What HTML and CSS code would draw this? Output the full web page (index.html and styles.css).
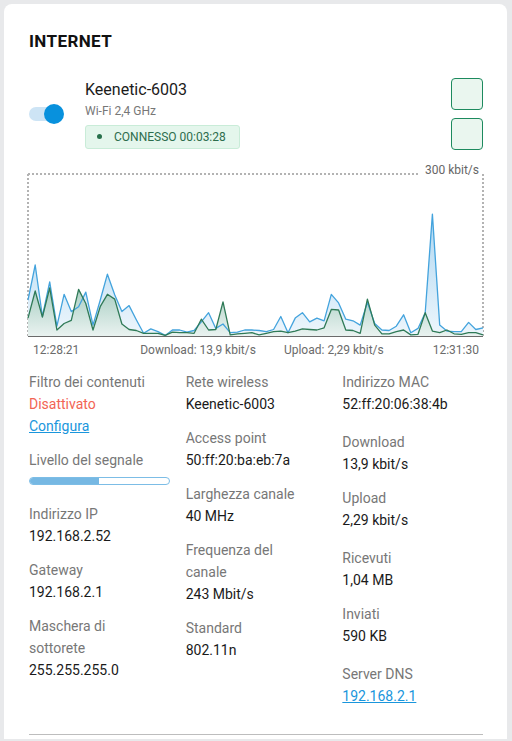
FILE: index.html
```html
<!DOCTYPE html>
<html lang="it">
<head>
  <meta charset="UTF-8">
  <title>Internet</title>
  <link rel="stylesheet" href="styles.css">
</head>
<body>

  <div class="card">
    <h2 class="card-title">INTERNET</h2>

    <div class="conn">
      <span class="toggle on"></span>
      <div class="conn-info">
        <div class="conn-name">Keenetic-6003</div>
        <div class="conn-band">Wi-Fi 2,4 GHz</div>
        <span class="badge"><i class="dot"></i>CONNESSO 00:03:28</span>
      </div>
      <div class="conn-actions">
        <button class="square-btn"></button>
        <button class="square-btn"></button>
      </div>
    </div>

    <div class="chart">
      <svg id="traffic" width="462" height="182" viewBox="0 0 462 182">
        <defs>
          <linearGradient id="gradDown" gradientUnits="userSpaceOnUse" x1="0" y1="40" x2="0" y2="176">
            <stop offset="0" stop-color="#a6d3f0"/>
            <stop offset="1" stop-color="#eef6fc"/>
          </linearGradient>
          <linearGradient id="gradUp" gradientUnits="userSpaceOnUse" x1="0" y1="100" x2="0" y2="176">
            <stop offset="0" stop-color="#78b39e"/>
            <stop offset="1" stop-color="#e9f2ef"/>
          </linearGradient>
        </defs>
        <g class="frame">
          <line x1="3" y1="14" x2="393" y2="14"/>
          <line x1="3" y1="14" x2="3" y2="176"/>
          <line x1="458" y1="14" x2="458" y2="176"/>
        </g>
        <text class="max-label" x="454" y="13.5" text-anchor="end">300 kbit/s</text>
        <polygon id="areaDown" fill="url(#gradDown)"/>
        <polygon id="areaUp" fill="url(#gradUp)" opacity="0.9"/>
        <polyline id="lineDown" class="line-down"/>
        <polyline id="lineUp" class="line-up"/>
        <line class="axis" x1="3" y1="176.5" x2="458" y2="176.5"/>
      </svg>
    </div>

    <div class="chart-legend">
      <span class="time">12:28:21</span>
      <span class="rate first">Download: 13,9 kbit/s</span>
      <span class="rate">Upload: 2,29 kbit/s</span>
      <span class="time end">12:31:30</span>
    </div>

    <div class="details">
      <div class="col">
        <div class="item">
          <div class="label">Filtro dei contenuti</div>
          <div class="value off">Disattivato</div>
          <a class="value link" href="#">Configura</a>
        </div>
        <div class="item">
          <div class="label">Livello del segnale</div>
          <div class="signal"><div class="signal-fill" style="width:50%"></div></div>
        </div>
        <div class="item">
          <div class="label">Indirizzo IP</div>
          <div class="value">192.168.2.52</div>
        </div>
        <div class="item">
          <div class="label">Gateway</div>
          <div class="value">192.168.2.1</div>
        </div>
        <div class="item">
          <div class="label">Maschera di sottorete</div>
          <div class="value">255.255.255.0</div>
        </div>
      </div>

      <div class="col">
        <div class="item">
          <div class="label">Rete wireless</div>
          <div class="value">Keenetic-6003</div>
        </div>
        <div class="item">
          <div class="label">Access point</div>
          <div class="value">50:ff:20:ba:eb:7a</div>
        </div>
        <div class="item">
          <div class="label">Larghezza canale</div>
          <div class="value">40 MHz</div>
        </div>
        <div class="item">
          <div class="label">Frequenza del canale</div>
          <div class="value">243 Mbit/s</div>
        </div>
        <div class="item">
          <div class="label">Standard</div>
          <div class="value">802.11n</div>
        </div>
      </div>

      <div class="col col-groups">
        <div class="item">
          <div class="label">Indirizzo MAC</div>
          <div class="value">52:ff:20:06:38:4b</div>
        </div>
        <div class="group">
          <div class="item">
            <div class="label">Download</div>
            <div class="value">13,9 kbit/s</div>
          </div>
          <div class="item">
            <div class="label">Upload</div>
            <div class="value">2,29 kbit/s</div>
          </div>
        </div>
        <div class="group">
          <div class="item">
            <div class="label">Ricevuti</div>
            <div class="value">1,04 MB</div>
          </div>
          <div class="item">
            <div class="label">Inviati</div>
            <div class="value">590 KB</div>
          </div>
        </div>
        <div class="item">
          <div class="label">Server DNS</div>
          <a class="value link" href="#">192.168.2.1</a>
        </div>
      </div>
    </div>

    <hr class="divider">
  </div>

  <script>
    // samples in kbit/s, one every ~3 seconds
    const down = [67,132,37,101,19,78,46,55,82,21,67,115,77,46,57,31,6,14,9,2,12,12,8,11,27,44,15,23,7,8,12,12,
                  11,9,13,37,7,34,44,27,34,29,78,62,32,29,21,63,24,12,11,19,40,7,15,44,226,21,10,9,9,26,13,16];
    const up   = [34,84,36,90,12,24,30,87,61,12,55,78,69,23,13,11,6,6,6,2,8,7,7,6,32,12,13,64,3,5,6,7,
                  3,6,9,10,7,10,14,13,12,16,50,49,12,11,6,69,21,5,5,9,12,3,4,44,10,7,12,5,4,7,7,3];

    const MAX = 300, LEFT = 3, RIGHT = 458, TOP = 14, BASE = 176.5;
    const step = (RIGHT - LEFT) / (down.length - 1);
    const scale = (BASE - TOP) / MAX;

    function toPoints(data) {
      return data.map((v, i) => (LEFT + i * step).toFixed(1) + ',' + (BASE - v * scale).toFixed(1)).join(' ');
    }
    function toArea(data) {
      return LEFT + ',' + BASE + ' ' + toPoints(data) + ' ' + RIGHT + ',' + BASE;
    }

    document.getElementById('lineDown').setAttribute('points', toPoints(down));
    document.getElementById('areaDown').setAttribute('points', toArea(down));
    document.getElementById('lineUp').setAttribute('points', toPoints(up));
    document.getElementById('areaUp').setAttribute('points', toArea(up));
  </script>

</body>
</html>
```

FILE: styles.css
```css
html, body {
  margin: 0;
  padding: 0;
}

body {
  background: #e8e9eb;
  font-family: Roboto, 'Noto Sans', sans-serif;
  color: #1a1a1a;
}

.card {
  margin: 4px 5px 0 4px;
  background: #fff;
  border-radius: 8px 8px 0 0;
  padding: 26px 24px 4px 25px;
}

.card-title {
  margin: 0;
  font-size: 17px;
  line-height: 22px;
  font-weight: 700;
  letter-spacing: 0.4px;
  color: #111;
}

/* connection header */
.conn {
  display: flex;
  align-items: center;
  margin-top: 26px;
}

.toggle {
  position: relative;
  display: block;
  width: 34px;
  height: 14px;
  border-radius: 7px;
  background: #cde4f5;
  flex-shrink: 0;
}
.toggle.on::after {
  content: "";
  position: absolute;
  left: 15px;
  top: -3px;
  width: 20px;
  height: 20px;
  border-radius: 50%;
  background: #0891dd;
}

.conn-info {
  margin-left: 22px;
  display: flex;
  flex-direction: column;
  align-items: flex-start;
}
.conn-name {
  font-size: 16px;
  line-height: 20px;
  color: #1b1b1b;
}
.conn-band {
  margin-top: 3px;
  font-size: 12px;
  line-height: 16px;
  color: #777;
}

.badge {
  margin-top: 6px;
  display: inline-flex;
  align-items: center;
  height: 24px;
  box-sizing: border-box;
  padding: 0 13px 0 11px;
  background: #e4f6ec;
  border: 1px solid #c9ecd8;
  border-radius: 3px;
  font-size: 12px;
  color: #2d6d4c;
}
.badge .dot {
  width: 5px;
  height: 5px;
  border-radius: 50%;
  background: #27704b;
  margin-right: 12px;
}

.conn-actions {
  margin-left: auto;
  display: flex;
  flex-direction: column;
  gap: 8px;
}
.square-btn {
  width: 32px;
  height: 32px;
  padding: 0;
  box-sizing: border-box;
  border: 1.5px solid #1d8a5e;
  border-radius: 4px;
  background: #eaf6ef;
}

/* traffic chart */
.chart {
  margin: 10px -4px 0 -4px;
  height: 182px;
}
.chart svg {
  display: block;
}
.frame line {
  stroke: #b3b3b3;
  stroke-width: 2;
  stroke-dasharray: 2 2;
}
.max-label {
  font-family: Roboto, sans-serif;
  font-size: 12px;
  fill: #666;
}
.line-down {
  fill: none;
  stroke: #43a3dd;
  stroke-width: 1.3;
  stroke-linejoin: round;
}
.line-up {
  fill: none;
  stroke: #2f7a57;
  stroke-width: 1.3;
  stroke-linejoin: round;
}
.axis {
  stroke: #6b6b6b;
  stroke-width: 1;
}

.chart-legend {
  display: flex;
  padding: 0 4px;
  font-size: 12px;
  line-height: 16px;
  color: #6b6b6b;
}
.chart-legend .time {
  flex: 1;
}
.chart-legend .time.end {
  text-align: right;
}
.chart-legend .rate.first {
  margin-left: 12px;
  margin-right: 28px;
}

/* details grid */
.details {
  margin-top: 13px;
  display: grid;
  grid-template-columns: repeat(3, 1fr);
  column-gap: 16px;
  font-size: 14px;
  line-height: 22px;
}
.col {
  display: flex;
  flex-direction: column;
  gap: 12px;
}
.col-groups {
  gap: 16px;
}
.group {
  display: flex;
  flex-direction: column;
  gap: 12px;
}
.item {
  display: flex;
  flex-direction: column;
  align-items: flex-start;
}
.label {
  color: #777;
  padding-right: 14px;
}
.value {
  color: #1a1a1a;
}
.value.off {
  color: #f26454;
}
.value.link {
  color: #1a96dc;
  text-decoration: underline;
}

.signal {
  margin-top: 6px;
  margin-bottom: 6px;
  width: 100%;
  height: 8px;
  box-sizing: border-box;
  border: 1px solid #7cbde6;
  border-radius: 4px;
  overflow: hidden;
}
.signal-fill {
  height: 100%;
  background: #76b8e3;
}

.divider {
  margin: 27px 0 0 0;
  border: 0;
  border-top: 1px solid #bdbdbd;
}
```
